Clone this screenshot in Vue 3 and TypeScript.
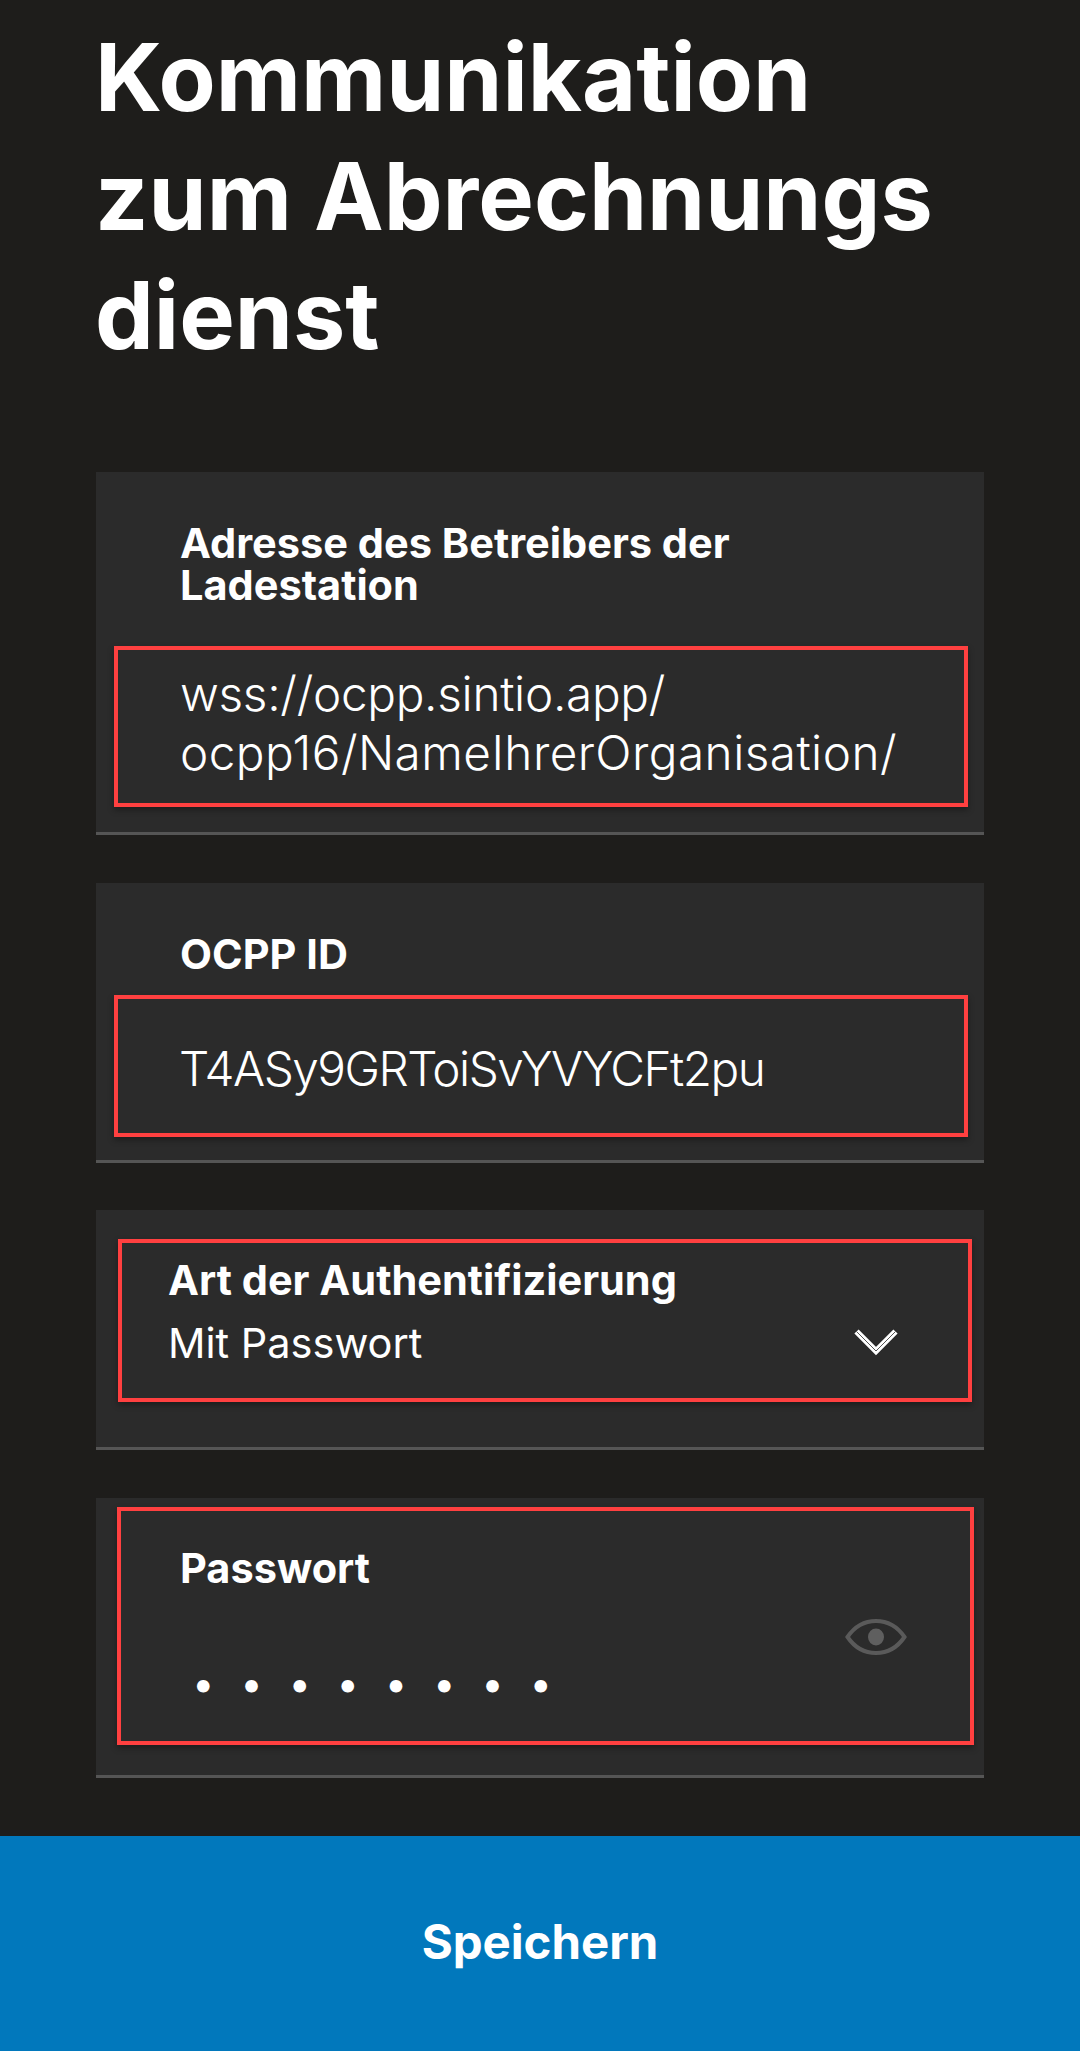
<script setup lang="ts">
const password = '••••••••'
</script>

<template>
  <main class="page">
    <h1 class="title">Kommunikation<br />zum Abrechnungs<br />dienst</h1>

    <section class="card card-address">
      <div class="label">Adresse des Betreibers der<br />Ladestation</div>
      <div class="mark mark-address">
        <div class="value">
          <div class="line-host">wss://ocpp.sintio.app/</div>
          <div class="line-path">ocpp16/NameIhrerOrganisation/</div>
        </div>
      </div>
    </section>

    <section class="card card-id">
      <div class="label">OCPP ID</div>
      <div class="mark mark-id">
        <div class="value value-id">T4ASy9GRToiSvYVYCFt2pu</div>
      </div>
    </section>

    <section class="card card-auth">
      <div class="mark mark-auth">
        <div class="auth-text">
          <div class="label">Art der Authentifizierung</div>
          <div class="select-value">Mit Passwort</div>
        </div>
        <svg class="chevron" width="44" height="29" viewBox="0 0 44 29" aria-hidden="true">
          <path d="M2.5 4.5 L22 24 L41.5 4.5" fill="none" stroke="#fff" stroke-width="6" />
          <path d="M2.5 4.5 L22 24 L41.5 4.5" fill="none" stroke="#555" stroke-width="1" />
        </svg>
      </div>
    </section>

    <section class="card card-pass">
      <div class="mark mark-pass">
        <div class="pass-text">
          <div class="label">Passwort</div>
          <div class="dots">{{ password }}</div>
        </div>
        <svg class="eye" width="62" height="36" viewBox="0 0 62 36" aria-hidden="true">
          <path d="M2.5 18 C10 7 20 2 31 2 C42 2 52 7 59.5 18 C52 29 42 34 31 34 C20 34 10 29 2.5 18 Z" fill="none" stroke="#5a5a5a" stroke-width="4" />
          <ellipse cx="31" cy="18" rx="8" ry="8.5" fill="#5f5f5f" />
        </svg>
      </div>
    </section>

    <button class="save" type="button">Speichern</button>
  </main>
</template>

<style>
html, body { margin: 0; background: #1e1d1b; }
</style>

<style scoped>
.page {
  width: 1080px;
  height: 2051px;
  background: #1e1d1b;
  color: #fff;
  font-family: Inter, "Noto Sans", sans-serif;
  display: flex;
  flex-direction: column;
  overflow: hidden;
}
.title {
  margin: 18px 0 0 95px;
  height: 454px;
  font-size: 93.4px;
  line-height: 119px;
  font-weight: 700;
}
.card {
  width: 888px;
  margin-left: 96px;
  box-sizing: border-box;
  background: #2b2b2b;
  border-bottom: 3px solid #555;
}
.label {
  font-size: 41.5px;
  line-height: 42px;
  font-weight: 700;
  white-space: nowrap;
}
.value {
  font-size: 47.7px;
  line-height: 59px;
  font-weight: 300;
  white-space: nowrap;
}
.line-host {
  letter-spacing: -0.3px;
}
.line-path {
  letter-spacing: 0.45px;
}
.value-id {
  letter-spacing: -1.5px;
}
.mark {
  box-sizing: border-box;
  border: 4px solid #ff4040;
  box-shadow: 0 3px 6px rgba(0, 0, 0, 0.35);
}
.card-address {
  height: 363px;
  padding-top: 50px;
  margin-bottom: 48px;
}
.card-address .label { margin-left: 84px; }
.mark-address {
  width: 854px;
  height: 161px;
  margin: 40px 0 0 18px;
  padding: 15px 0 0 62px;
}
.card-id {
  height: 280px;
  padding-top: 50px;
  margin-bottom: 47px;
}
.card-id .label { margin-left: 84px; }
.mark-id {
  width: 854px;
  height: 142px;
  margin: 20px 0 0 18px;
  padding: 41px 0 0 61px;
}
.card-auth {
  height: 240px;
  padding-top: 29px;
  margin-bottom: 48px;
}
.mark-auth {
  width: 854px;
  height: 163px;
  margin-left: 22px;
  padding: 16px 0 0 46px;
  display: flex;
  justify-content: space-between;
}
.select-value {
  font-size: 41.5px;
  line-height: 48px;
  margin-top: 18px;
  font-weight: 400;
}
.chevron {
  margin: 68px 70px 0 0;
}
.card-pass {
  height: 280px;
  padding-top: 9px;
}
.mark-pass {
  width: 857px;
  height: 238px;
  margin-left: 21px;
  padding: 36px 0 0 59px;
  display: flex;
  justify-content: space-between;
}
.dots {
  margin: 71px 0 0 12px;
  font-size: 40px;
  line-height: 48px;
  letter-spacing: 25.7px;
}
.eye {
  margin: 72px 63px 0 0;
}
.save {
  margin-top: 58px;
  height: 215px;
  width: 1080px;
  border: 0;
  padding: 0 0 5px;
  background: #0178bc;
  color: #fff;
  font-family: Inter, "Noto Sans", sans-serif;
  font-size: 47.4px;
  font-weight: 700;
}
</style>
